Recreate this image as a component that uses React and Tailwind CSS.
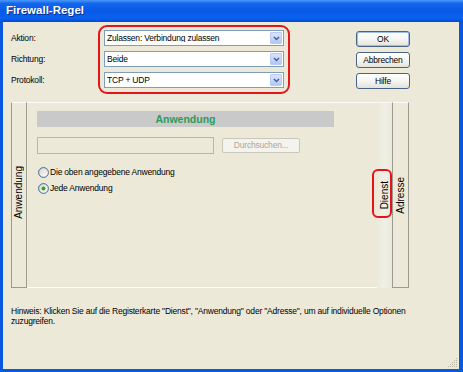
const Chevron = () => (
  <svg width="7" height="5" viewBox="0 0 7 5">
    <path d="M1 1 L3.5 3.5 L6 1" stroke="#4D6185" strokeWidth="1.5" fill="none" />
  </svg>
);

function Combo({ value }) {
  return (
    <div className="h-[16px] w-full flex items-center bg-white border border-[#7F9DB9]">
      <span className="flex-1 pl-[2px] whitespace-nowrap overflow-hidden">{value}</span>
      <div className="w-[12px] h-[12px] mr-[1px] flex items-center justify-center rounded-[1px] border border-[#B9CBF3] bg-[linear-gradient(180deg,#D8E4FE_0%,#C1D3FB_60%,#B2C6F4_100%)]">
        <Chevron />
      </div>
    </div>
  );
}

function Btn({ children, def }) {
  return (
    <div
      className={
        "h-[16px] w-[54px] flex items-center justify-center rounded-[3px] border border-[#4A6389] bg-[linear-gradient(180deg,#FFFFFF_0%,#F4F4F0_55%,#E4E2D9_100%)] " +
        (def ? "shadow-[inset_0_0_0_1px_#9FBCEA]" : "")
      }
    >
      {children}
    </div>
  );
}

function Radio({ checked }) {
  return (
    <svg width="11" height="11" viewBox="0 0 11 11">
      <defs>
        <linearGradient id={checked ? "rg1" : "rg2"} x1="0" y1="0" x2="1" y2="1">
          <stop offset="0" stopColor="#D8D5C8" />
          <stop offset="1" stopColor="#FFFFFF" />
        </linearGradient>
      </defs>
      <circle cx="5.5" cy="5.5" r="4.9" fill={`url(#${checked ? "rg1" : "rg2"})`} stroke="#2A5A8A" strokeWidth="0.9" />
      {checked && <circle cx="5.5" cy="5.5" r="2" fill="#2DA82D" />}
    </svg>
  );
}

export default function App() {
  return (
    <div className="w-[463px] h-[372px] flex flex-col font-['Liberation_Sans',Arial,sans-serif] text-[8.5px] tracking-[-0.2px] leading-none text-black select-none overflow-hidden">
      <div className="h-[22px] shrink-0 flex items-center pl-[6px] bg-[linear-gradient(180deg,#4A98FA_0%,#1366EC_16%,#0759E6_50%,#0A62EF_82%,#004AD6_100%)]">
        <span className="text-white font-bold text-[11.5px] tracking-normal [text-shadow:1px_1px_0_#0A2E8C]">Firewall-Regel</span>
      </div>

      <div className="relative flex-1 flex flex-col bg-[#ECE9D8] border-l-[3px] border-r-[4px] border-b-[3px] border-[#0A57E0] pt-[3px] pl-[8px]">
        {/* top section */}
        <div className="flex items-start">
          <div className="w-[87px] pt-[5px] flex flex-col gap-[5px]">
            <div className="h-[16px] flex items-center">Aktion:</div>
            <div className="h-[16px] flex items-center">Richtung:</div>
            <div className="h-[16px] flex items-center">Protokoll:</div>
          </div>
          <div className="w-[192px] h-[69px] border-2 border-[#E3151B] rounded-[9px] px-[4px] pt-[3px] flex flex-col gap-[5px]">
            <Combo value="Zulassen: Verbindung zulassen" />
            <Combo value="Beide" />
            <Combo value="TCP + UDP" />
          </div>
          <div className="ml-[66px] pt-[6px] flex flex-col gap-[5px]">
            <Btn def>OK</Btn>
            <Btn>Abbrechen</Btn>
            <Btn>Hilfe</Btn>
          </div>
        </div>

        {/* tab panel */}
        <div className="relative mt-[8px] w-[398px] h-[186px] flex">
          <div className="w-[16px] h-full flex items-center justify-center border-l border-r border-b border-[#9C9B90] border-t border-t-[#FBFBF8]">
            <span className="[writing-mode:vertical-rl] rotate-180 text-[10px] tracking-normal pt-[6px]">Anwendung</span>
          </div>

          <div className="flex-1 h-full border-t border-t-[#FBFBF8] border-b border-b-white pl-[10px] pt-[8px] flex flex-col">
            <div className="w-[297px] h-[16px] bg-[#C9C9C9] flex items-center justify-center">
              <span className="font-bold text-[10.5px] tracking-normal text-[#2E9A57]">Anwendung</span>
            </div>
            <div className="mt-[10px] flex items-start">
              <div className="w-[177px] h-[17px] border border-[#B8B6A8] bg-[#ECE9D8]" />
              <div className="ml-[8px] mt-[1px] w-[78px] h-[15px] flex items-center justify-center rounded-[2px] border border-[#C9C7BA] bg-[#F4F3EE] text-[#ACA899]">
                Durchsuchen...
              </div>
            </div>
            <div className="mt-[10px] flex flex-col">
              <div className="h-[16px] flex items-center gap-[1px] pl-[1px]">
                <Radio />
                <span>Die oben angegebene Anwendung</span>
              </div>
              <div className="h-[16px] flex items-center gap-[1px] pl-[1px]">
                <Radio checked />
                <span>Jede Anwendung</span>
              </div>
            </div>
          </div>

          <div className="w-[15px] h-full flex items-center justify-center border-t border-t-[#FBFBF8] bg-[linear-gradient(90deg,#ECE9D8_0%,#F1F0E7_50%,#ECE9D8_100%)]">
            <span className="[writing-mode:vertical-rl] rotate-180 text-[10px] tracking-normal">Dienst</span>
          </div>
          <div className="w-[17px] h-full flex items-center justify-center border-l border-r border-b border-[#9C9B90] border-t border-t-[#FBFBF8]">
            <span className="[writing-mode:vertical-rl] rotate-180 text-[10px] tracking-normal">Adresse</span>
          </div>

          <div className="absolute left-[361px] top-[67px] w-[20px] h-[49px] border-2 border-[#E3151B] rounded-[6px] pointer-events-none" />
        </div>

        {/* hint */}
        <div className="mt-[18px] w-[405px] leading-[10px]">
          Hinweis: Klicken Sie auf die Registerkarte "Dienst", "Anwendung" oder "Adresse", um auf individuelle Optionen zuzugreifen.
        </div>

        {/* resize grip */}
        <svg className="absolute right-[1px] bottom-[1px]" width="11" height="11" viewBox="0 0 11 11">
          <g fill="#B9B6A6">
            <rect x="9" y="1" width="1" height="1" />
            <rect x="7" y="3" width="1" height="1" /><rect x="9" y="3" width="1" height="1" />
            <rect x="5" y="5" width="1" height="1" /><rect x="7" y="5" width="1" height="1" /><rect x="9" y="5" width="1" height="1" />
            <rect x="3" y="7" width="1" height="1" /><rect x="5" y="7" width="1" height="1" /><rect x="7" y="7" width="1" height="1" /><rect x="9" y="7" width="1" height="1" />
            <rect x="1" y="9" width="1" height="1" /><rect x="3" y="9" width="1" height="1" /><rect x="5" y="9" width="1" height="1" /><rect x="7" y="9" width="1" height="1" /><rect x="9" y="9" width="1" height="1" />
          </g>
        </svg>
      </div>
    </div>
  );
}
